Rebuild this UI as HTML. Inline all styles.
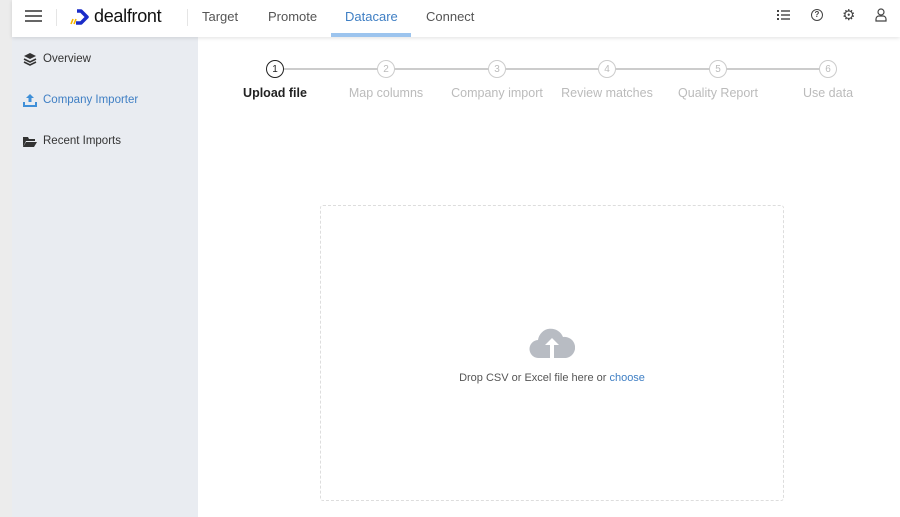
<!DOCTYPE html>
<html><head><style>
*{margin:0;padding:0;box-sizing:border-box}
body{width:900px;height:517px;overflow:hidden;background:#fff;font-family:"Liberation Sans",sans-serif;position:relative}
.strip{position:absolute;left:0;top:0;width:12px;height:517px;background:#ececec}
.hdr{position:absolute;left:12px;top:0;width:888px;height:37px;background:#fff;box-shadow:0 1px 4px rgba(0,0,0,.12);z-index:2}
.nav{position:absolute;top:9px;font-size:13px;color:#555}
.side{position:absolute;left:12px;top:37px;width:186px;height:480px;background:#e9ecf1}
.si{position:absolute;left:31px;font-size:11.5px;color:#333}
.step{position:absolute;top:60px;width:110px;text-align:center}
.circ{width:18px;height:18px;border:1.5px solid #ccc;border-radius:50%;margin:0 auto;font-size:10px;color:#bbb;background:#fff;display:flex;align-items:center;justify-content:center}
.lbl{font-size:12.5px;color:#bbb;margin-top:8px}
.line{position:absolute;top:68px;left:284px;width:544px;height:1.5px;background:#ccc}
.drop{position:absolute;left:320px;top:205px;width:464px;height:296px;border:1px dashed #ddd;border-radius:3px}
</style></head><body>
<div class="strip"></div>
<div class="hdr">
 <div style="position:absolute;left:13px;top:10px;width:17px;height:2px;background:#666;box-shadow:0 5px 0 #666,0 10px 0 #666"></div>
 <div style="position:absolute;left:44px;top:9px;width:1px;height:17px;background:#e5e5e5"></div>
 <svg style="position:absolute;left:57px;top:8px" width="22" height="18" viewBox="0 0 22 18"><path d="M8 3h4l6 6-6 6H7" stroke="#1a2cc8" stroke-width="3.5" fill="none" stroke-linejoin="round"/><path d="M2 16l2-5M5 16l2-5" stroke="#f5b400" stroke-width="1.6"/></svg>
 <div style="position:absolute;left:82px;top:6px;font-size:18px;color:#111;letter-spacing:-.3px">dealfront</div>
 <div style="position:absolute;left:175px;top:9px;width:1px;height:17px;background:#e5e5e5"></div>
 <div class="nav" style="left:190px">Target</div>
 <div class="nav" style="left:256px">Promote</div>
 <div class="nav" style="left:333px;color:#3f7fc4">Datacare</div>
 <div style="position:absolute;left:319px;top:33px;width:80px;height:4px;background:#9cc4ee"></div>
 <div class="nav" style="left:414px">Connect</div>
 <svg style="position:absolute;left:765px;top:9px" width="14" height="12"><g fill="#444"><rect x="0" y="1" width="2" height="2"/><rect x="0" y="5" width="2" height="2"/><rect x="0" y="9" width="2" height="2"/><rect x="4" y="1.3" width="9" height="1.4"/><rect x="4" y="5.3" width="9" height="1.4"/><rect x="4" y="9.3" width="9" height="1.4"/></g></svg>
 <div style="position:absolute;left:799px;top:9px;width:12px;height:12px;border:1.3px solid #444;border-radius:50%;font-size:8px;line-height:10px;text-align:center;color:#444;font-weight:bold">?</div>
 <div style="position:absolute;left:830px;top:6px;font-size:15px;color:#444">⚙</div>
 <svg style="position:absolute;left:863px;top:8px" width="12" height="14"><circle cx="6" cy="4" r="3" fill="none" stroke="#444" stroke-width="1.2"/><path d="M1 13v-2a3 3 0 0 1 3-3h4a3 3 0 0 1 3 3v2z" fill="none" stroke="#444" stroke-width="1.2"/></svg>
</div>
<div class="side">
 <svg style="position:absolute;left:11px;top:15px" width="14" height="14"><path d="M7 1l6 3-6 3-6-3z" fill="#333"/><path d="M1 7l6 3 6-3M1 10l6 3 6-3" fill="none" stroke="#333" stroke-width="1.6"/></svg>
 <div class="si" style="top:16px">Overview</div>
 <svg style="position:absolute;left:11px;top:56px" width="14" height="14"><path d="M7 1l4 4H8.5v4h-3V5H3z" fill="#3f8fd8"/><path d="M1 9v4h12V9" fill="none" stroke="#3f8fd8" stroke-width="2"/></svg>
 <div class="si" style="top:57px;color:#3f7fc4">Company Importer</div>
 <svg style="position:absolute;left:11px;top:99px" width="14" height="12"><path d="M0 1h5l1 2h6v2H3L0 11z" fill="#333"/><path d="M3 6h11l-3 5H0z" fill="#333"/></svg>
 <div class="si" style="top:98px">Recent Imports</div>
</div>
<div class="line"></div>
<div class="step" style="left:220px"><div class="circ" style="border-color:#222;color:#222">1</div><div class="lbl" style="color:#222;font-weight:bold">Upload file</div></div>
<div class="step" style="left:331px"><div class="circ">2</div><div class="lbl">Map columns</div></div>
<div class="step" style="left:442px"><div class="circ">3</div><div class="lbl">Company import</div></div>
<div class="step" style="left:552px"><div class="circ">4</div><div class="lbl">Review matches</div></div>
<div class="step" style="left:663px"><div class="circ">5</div><div class="lbl">Quality Report</div></div>
<div class="step" style="left:773px"><div class="circ">6</div><div class="lbl">Use data</div></div>
<div class="drop"></div>
<svg style="position:absolute;left:529px;top:324px" width="46" height="36" viewBox="0 0 46 36"><path d="M10 34a9 9 0 0 1-1-18 13 13 0 0 1 25-3 10 10 0 0 1 3 21z" fill="#b8bcc3"/><path d="M23 14l-7 7h5v13h4V21h5z" fill="#fff"/></svg>
<div style="position:absolute;left:320px;width:464px;top:372px;text-align:center;font-size:11px;color:#555">Drop CSV or Excel file here or <span style="color:#3f7fc4">choose</span></div>
</body></html>
